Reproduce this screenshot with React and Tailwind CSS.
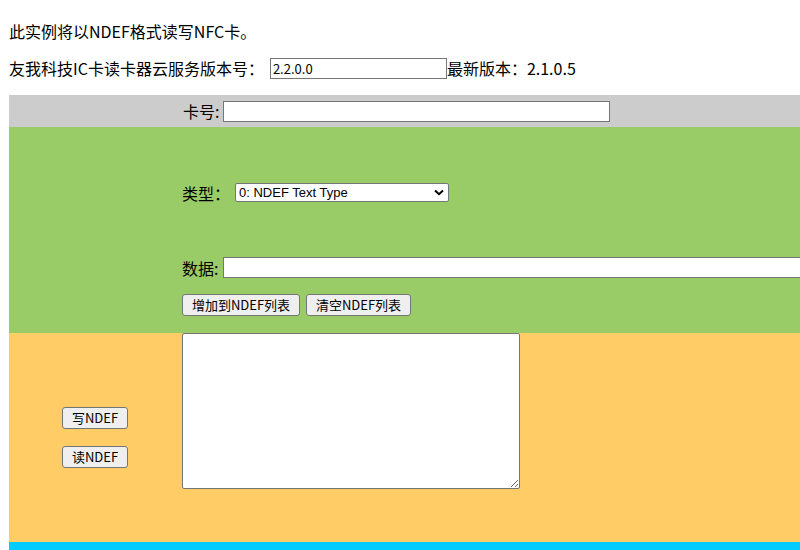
import React from "react";

const cjk = { fontFamily: '"Microsoft YaHei", "Noto Sans CJK SC", "Noto Sans", sans-serif' };
const ui = { fontFamily: '"Noto Sans CJK SC", "Liberation Sans", sans-serif' };

function Btn({ children, className = "" }) {
  return (
    <button
      className={`h-[22px] px-[6px] bg-[#efefef] border border-[#767676] rounded-[3px] text-[13px] leading-[20px] text-black ${className}`}
      style={ui}
    >
      {children}
    </button>
  );
}

export default function App() {
  return (
    <div className="w-full h-[550px] overflow-hidden bg-white text-black text-[16px]" style={cjk}>
      <div className="pl-[9px] pt-[21px] h-[42px] leading-[21px]">此实例将以NDEF格式读写NFC卡。</div>
      <div className="mt-[15px] pl-[9px] h-[22px] flex items-center">
        <span>友我科技IC卡读卡器云服务版本号：</span>
        <input
          defaultValue="2.2.0.0"
          className="ml-[6px] w-[177px] h-[21px] border border-[#767676] bg-white px-[2px] text-[13px] outline-none"
          style={ui}
        />
        <span>最新版本：2.1.0.5</span>
      </div>

      <div className="mt-[16px] ml-[9px] w-[1200px]">
        {/* gray row */}
        <div className="flex h-[32px] bg-[#cccccc]">
          <div className="w-[173px] shrink-0" />
          <div className="flex items-center">
            <span className="w-[41px] pl-[1px]">卡号:</span>
            <input className="w-[387px] h-[21px] border border-[#767676] bg-white outline-none" />
          </div>
        </div>

        {/* green row */}
        <div className="flex h-[206px] bg-[#99cc66]">
          <div className="w-[173px] shrink-0" />
          <div className="flex flex-col">
            <div className="mt-[56px] h-[19px] flex items-center">
              <span className="w-[53px]">类型：</span>
              <div className="relative w-[214px] h-[19px]">
                <select
                  className="block appearance-none w-full h-[19px] border border-[#767676] rounded-[2px] bg-white pl-[3px] text-[13px] leading-[17px] outline-none"
                  style={{ fontFamily: '"Liberation Sans", Arial, sans-serif' }}
                  defaultValue="0"
                >
                  <option value="0">0: NDEF Text Type</option>
                </select>
                <svg className="absolute right-[5px] top-[6px] pointer-events-none" width="10" height="7" viewBox="0 0 10 7">
                  <path d="M1 1.5 L5 5.2 L9 1.5" fill="none" stroke="#000" strokeWidth="2" />
                </svg>
              </div>
            </div>
            <div className="mt-[55px] h-[21px] flex items-center">
              <span className="w-[41px]">数据:</span>
              <input className="w-[700px] h-[21px] border border-[#767676] bg-white outline-none" />
            </div>
            <div className="mt-[16px] flex gap-[6px]">
              <Btn className="w-[118px]">增加到NDEF列表</Btn>
              <Btn className="w-[105px]">清空NDEF列表</Btn>
            </div>
          </div>
        </div>

        {/* orange row */}
        <div className="flex h-[209px] bg-[#ffcc66]">
          <div className="w-[173px] shrink-0 flex flex-col items-center justify-center gap-[17px] pr-[1px]">
            <Btn className="w-[66px]">写NDEF</Btn>
            <Btn className="w-[66px]">读NDEF</Btn>
          </div>
          <div>
            <textarea className="block w-[338px] h-[156px] border border-[#767676] rounded-[2px] bg-white outline-none resize" />
          </div>
        </div>

        {/* cyan row */}
        <div className="h-[20px] bg-[#00ccff]" />
      </div>
    </div>
  );
}
